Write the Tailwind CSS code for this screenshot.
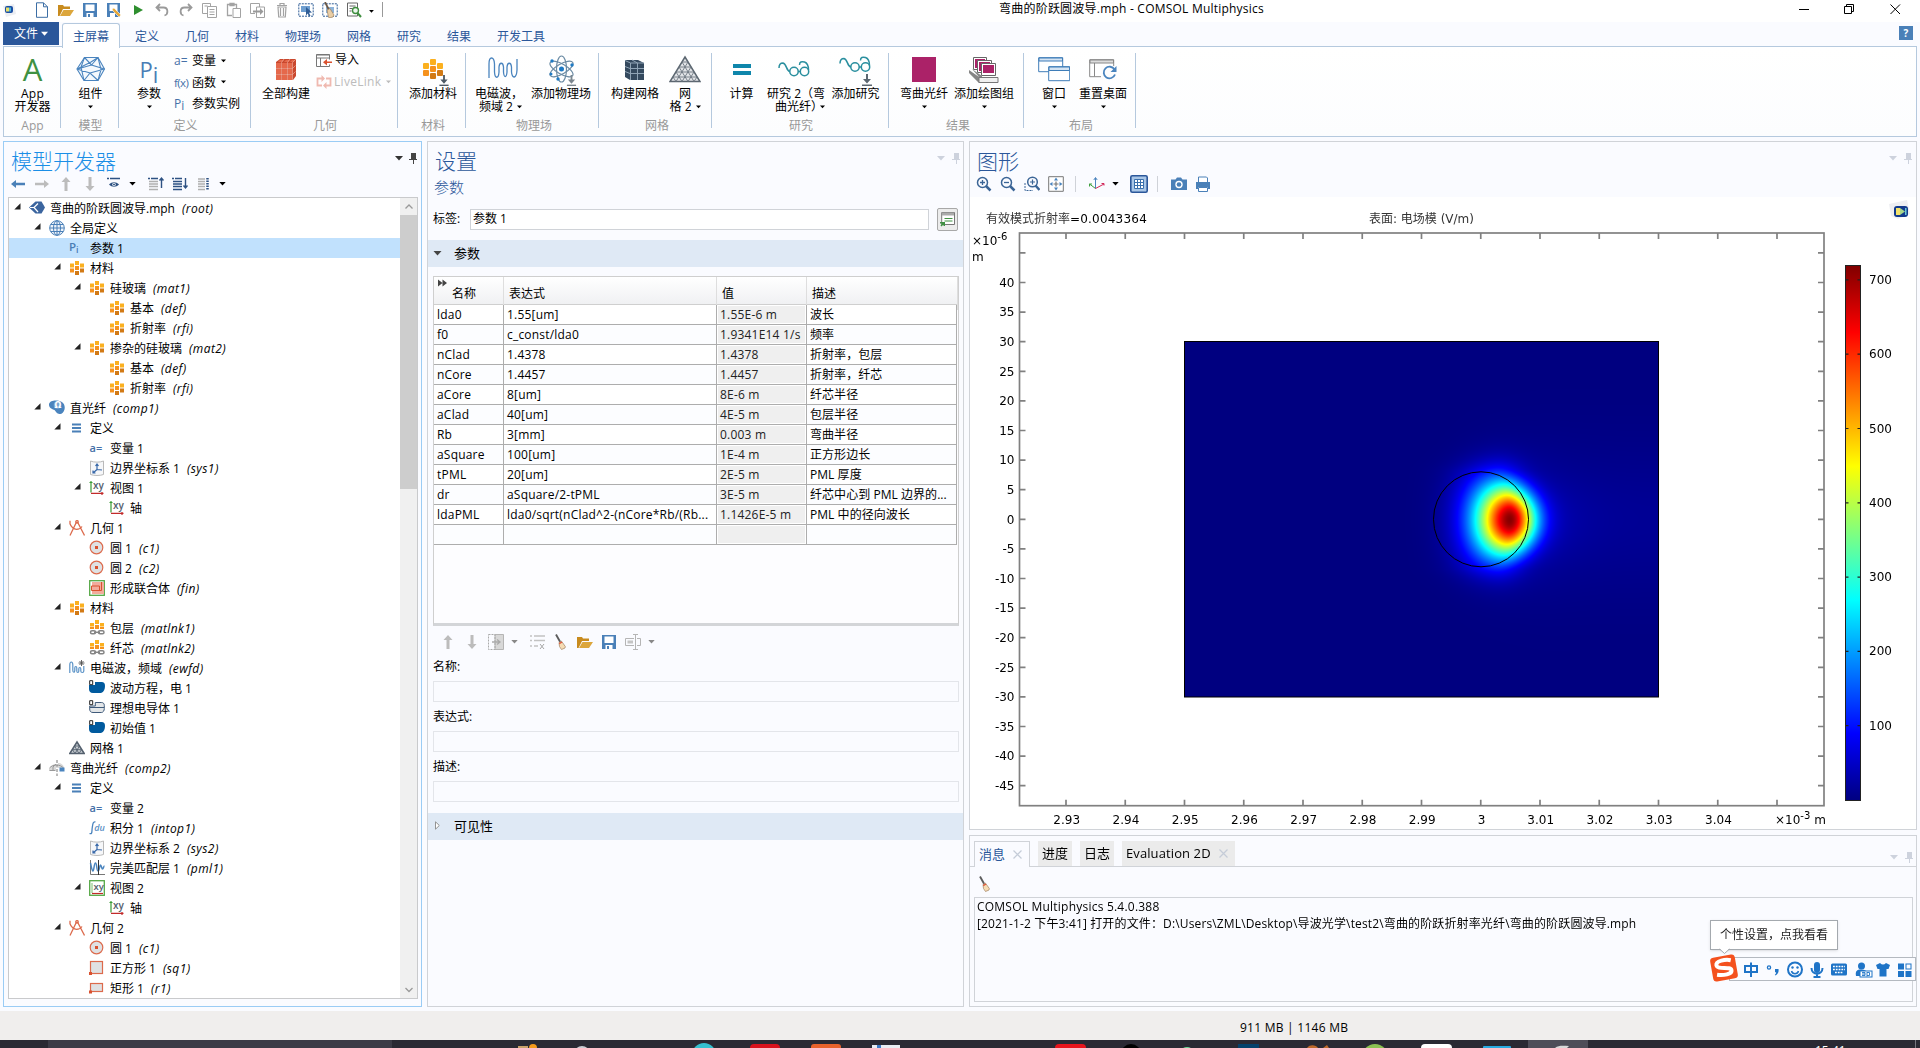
<!DOCTYPE html>
<html lang="zh-CN">
<head>
<meta charset="utf-8">
<title>弯曲的阶跃圆波导.mph - COMSOL Multiphysics</title>
<script src="https://cdn.jsdelivr.net/npm/@tailwindcss/browser@4"></script>
</head>
<body class="w-[1920px] h-[1048px] overflow-hidden bg-[#fafbff] text-black text-[12px] leading-[14px] font-['Open_Sans','Noto_Sans_CJK_SC',sans-serif]">

<svg class="hidden">
  <symbol id="caret" viewBox="0 0 8 5"><path d="M0 0h8L4 4.5z" fill="currentColor"/></symbol>
  <symbol id="pin" viewBox="0 0 8 11"><path d="M2 0h5v6h1v1H5v4H4V7H0V6h2z" fill="currentColor"/></symbol>
  <symbol id="broom" viewBox="0 0 16 16"><path d="M3 .5l4.500 8" stroke="#5c5c5c" stroke-width="1.800"/><path d="M6 8.500l2.500-1.300 3.800 5.300-.3 1.500-3.500 1.500-2-3z" fill="#f6dcb4" stroke="#a98d6d" stroke-width=".8"/><path d="M6 9l2.700-1.600.7 1L6.500 10.300z" fill="#e0533a"/></symbol>
  <symbol id="folder" viewBox="0 0 16 16"><path d="M0 3h5l1 1.500h6V7H5L1.500 14H0z" fill="#c88b1e"/><path d="M5.500 8H16l-4 6H2z" fill="#dca63c"/></symbol>
  <symbol id="save" viewBox="0 0 16 16"><path d="M1 1h14v14H1z" fill="#4a80b8"/><path d="M3.500 2.500h9V9h-9zM4.500 11h7v4h-7z" fill="#fff"/><path d="M6 12h2v3H6z" fill="#4a80b8"/></symbol>
  <symbol id="up" viewBox="0 0 16 16"><path d="M8 1l4.500 5H9.500v9h-3V6H3.500z" fill="#bcbcbc"/></symbol>
  <symbol id="down" viewBox="0 0 16 16"><path d="M8 15l4.500-5H9.500V1h-3v9H3.500z" fill="#bcbcbc"/></symbol>
  <symbol id="dl" viewBox="0 0 10 12"><path d="M4 0h2v5h3L5 9.500 1 5h3z" fill="currentColor"/><path d="M0 10.500h10V12H0z" fill="currentColor"/></symbol>

  <symbol id="root" viewBox="0 0 16 16"><path d="M0 7.500L6.500 1.500h6l3.500 6-3.500 6h-6z" fill="#3b659f"/><path d="M5 7.500L9 3.500M5 7.500l4 4.500M1 7.500h4" stroke="#fff" stroke-width="1.200" fill="none"/></symbol>
  <symbol id="globe" viewBox="0 0 16 16"><g fill="none" stroke="#4a80b8"><circle cx="8" cy="8" r="7.300" fill="#eef3fa"/><ellipse cx="8" cy="8" rx="3.500" ry="7.300"/><path d="M8 .7v14.600M.7 8h14.600M2 4.500h12M2 11.500h12"/></g></symbol>
  <symbol id="pi" viewBox="0 0 16 16"><text x="0" y="10.500" font-size="11.500" font-weight="600" font-family="Open Sans" fill="#4a7db5">P</text><text x="7" y="13" font-size="9" font-weight="600" font-family="Open Sans" fill="#4a7db5">i</text></symbol>
  <symbol id="mat" viewBox="0 0 16 16"><path d="M1 3.500h4v4H1zM6 1h4v4H6zM11 3.500h4v4h-4z" fill="#fbb01f"/><path d="M6 6h4v4H6zM1 8.500h4v4H1z" fill="#f5921e"/><path d="M11 8.500h4v4h-4zM6 11h4v4H6z" fill="#d27a16"/></symbol>
  <symbol id="matlnk" viewBox="0 0 16 16"><path d="M1 3h4v3.500H1zM6 0h4v4H6zM11 3h4v3.500h-4z" fill="#fbb01f"/><path d="M6 5h4v4H6zM1 7h4v2H1zM11 7h4v2h-4z" fill="#f5921e"/><g fill="none" stroke="#858585" stroke-width="1.500"><rect x="1.500" y="10.800" width="5" height="3" rx="1.500"/><rect x="9.500" y="10.800" width="5.500" height="3" rx="1.500"/><path d="M5 12.300h6"/></g></symbol>
  <symbol id="comp1" viewBox="0 0 16 16"><path d="M0 4C1-.5 9 0 12 1.500c4 2 4 6 3.500 8-.7 3-3 5-5 4.500-3-.5-3.500-2.500-5-4C3.500 9.500-.5 8 0 4z" fill="#4a84be"/><circle cx="8.500" cy="5" r="3.800" fill="#79a5d2"/><text x="5.400" y="8" font-size="8" font-weight="700" font-family="DejaVu Sans" fill="#fff">Ω</text></symbol>
  <symbol id="comp2" viewBox="0 0 16 16"><path d="M0 9c1-3 4-5 7-5v6L0 10.500zM9 3c3 0 6 2 6 5H9z" fill="#d9d9d9"/><path d="M.5 8C4 4 11 4 14.500 8M4 11V7l3-3M.5 10.500h6" stroke="#999" fill="none"/><path d="M10.500 7.500h5v4h-5z" fill="#4a84be"/><path d="M8 0v16" stroke="#777" stroke-dasharray="3 1.500"/></symbol>
  <symbol id="def" viewBox="0 0 16 16"><path d="M3 3.500h9v2H3zM3 7h9v2H3zM3 10.500h9v2H3z" fill="#4a80b8"/></symbol>
  <symbol id="var" viewBox="0 0 16 16"><text x=".5" y="11.500" font-size="11" font-weight="600" font-family="Open Sans" fill="#4671a8">a=</text></symbol>
  <symbol id="intg" viewBox="0 0 16 16"><path d="M.5 13.500c3 1 2.200-2 2.700-5.500S4 1 6.500 2" stroke="#4a84be" stroke-width="1.300" fill="none"/><text x="5.200" y="11" font-size="9" font-style="italic" font-weight="600" font-family="Open Sans" fill="#5a8fc4">du</text></symbol>
  <symbol id="sys" viewBox="0 0 16 16"><path d="M1.500 1v13.500c3 1.300 10 1.300 13 0V1c-3 1.500-10 1.500-13 0z" fill="#f6f7f9" stroke="#b9b9b9"/><path d="M8 10V5M8 9.500l5 .5M8 9.500L4 13M6.500 6L8 4l1.500 2M4 10.500V13h2.500" stroke="#3667a8" stroke-width="1.200" fill="none"/></symbol>
  <symbol id="xy" viewBox="0 0 16 16"><path d="M2 1v11.500" stroke="#3a9a35" stroke-width="1.200"/><path d="M2 13.300h12.500M13 12v3" stroke="#c22a2a" stroke-width="1.200"/><path d="M.5 2.500h3" stroke="#3a9a35"/><text x="4" y="9" font-size="10" font-weight="600" font-family="Open Sans" fill="#54606e">xy</text></symbol>
  <symbol id="xyg" viewBox="0 0 16 16"><rect x=".7" y=".7" width="14.600" height="14.600" fill="#fff" stroke="#55a845" stroke-width="1.300"/><path d="M3 3v10" stroke="#7bbf70"/><path d="M3 13.500h11" stroke="#c22a2a" stroke-width="1.200"/><text x="4.500" y="9.500" font-size="9.500" font-weight="600" font-family="Open Sans" fill="#54606e">xy</text></symbol>
  <symbol id="geom" viewBox="0 0 16 16"><g fill="none" stroke="#dc6a4c" stroke-width="1.300"><path d="M8.500 2L15.500 15.500M7.500 2L1 15.500M1 .8v3c1 3 4 5.500 6.500 5.500S12 8 13 6.500"/><circle cx="8" cy="1.800" r="1.200"/></g></symbol>
  <symbol id="circ" viewBox="0 0 16 16"><circle cx="7.500" cy="7.500" r="6.300" fill="#dfe1e3" stroke="#dc6a4c" stroke-width="1.200"/><path d="M6 6h3v3H6z" fill="#d9512f"/></symbol>
  <symbol id="fin" viewBox="0 0 16 16"><rect x=".7" y=".7" width="14.600" height="14.600" fill="#fff" stroke="#55a845" stroke-width="1.300"/><path d="M3 2h12v12H3z" fill="#f3ab9c"/><path d="M2.500 6h8v4.500h-8zM5 10.500h7.500V2" fill="none" stroke="#d9512f"/></symbol>
  <symbol id="sq" viewBox="0 0 16 16"><rect x="1.500" y="1.500" width="12" height="12" fill="#dfe1e3" stroke="#dc6a4c" stroke-width="1.200"/><path d="M0 12h3v3H0z" fill="#d9512f"/></symbol>
  <symbol id="rect" viewBox="0 0 16 16"><rect x="1.500" y="3.500" width="12" height="8" fill="#dfe1e3" stroke="#dc6a4c" stroke-width="1.200"/><path d="M0 10.500h3v3H0z" fill="#d9512f"/></symbol>
  <symbol id="wave" viewBox="0 0 16 16"><path d="M.8 13V5c0-4 3-4 3 0v5c0 3 2 3 2 0V8c0-2 2-2 2 0v3c0 2 2 2 2 0V9c0-2 2-2 2 0v2c0 2 3 2 3 0V6" fill="none" stroke="#5b93c7" stroke-width="1.200"/><path d="M12.500 0v6M9.500 3h6M10.500 1l4 4M14.500 1l-4 4" stroke="#555" stroke-width=".9"/></symbol>
  <symbol id="dom" viewBox="0 0 16 16"><path d="M0 5h6V2h6c3 0 4 1 4 4s-1 6-4 7H4c-3 0-4-2-4-4z" fill="#005a9e"/><path d="M.7.700h3v4h-3z" fill="#fff" stroke="#222"/></symbol>
  <symbol id="pec" viewBox="0 0 16 16"><path d="M.7 6h5.600V2.500h6c2 0 3 1 3 3v3c0 2-1 4-3 4H4c-2.500 0-3.300-1.500-3.300-3.500zM1 7.500h14" fill="#e3e6e8" stroke="#3f5a7a"/><path d="M.7.700h3v4h-3z" fill="#fff" stroke="#222"/></symbol>
  <symbol id="mesh" viewBox="0 0 16 16"><path d="M8 2L15.200 13.500H.8z" fill="#c9ced3" stroke="#54606e" stroke-width="1.500"/><path d="M5.500 6h5M3.500 9.700h9M5.500 6l4.500 7.500M10.500 6L6 13.500M3.500 9.700L6 13.500M12.500 9.700L10 13.500" stroke="#54606e" stroke-width=".9" fill="none"/></symbol>
  <symbol id="pml" viewBox="0 0 16 16"><path d="M1.500 0v14.500H16" stroke="#777" fill="none"/><path d="M1.500 3c1 5 1.500 8 2.500 8s1-8 2.500-8 1 8 2.500 8 1.500-6 2.500-6 1 4 2 4 1-3 2-3" stroke="#4a84be" stroke-width="1.500" fill="none"/><path d="M9.500 0v15" stroke="#333"/></symbol>
</svg>

<div class="flex flex-col w-full h-full">

<!-- title bar -->
<header class="flex items-center h-[22px] bg-white shrink-0">
  <div class="flex items-center w-[360px] h-[20px] mt-[-2px] shrink-0 [&>svg]:shrink-0">
    <svg class="w-[14px] h-[14px] ml-[2px]" viewBox="0 0 14 14"><path d="M1 3l11-2 2 10-10 3z" fill="#eceef2"/><rect x="3" y="3" width="8" height="7" rx="2" fill="#1b4fa5"/><rect x="4" y="4.500" width="3" height="4" fill="#e8e06a"/><rect x="7" y="4.500" width="2" height="4" fill="#4fb6d8"/></svg>
    <div class="w-px h-[15px] bg-[#999] ml-[10px] mr-[8px] mt-[2px]"></div>
    <svg class="w-4 h-4" viewBox="0 0 16 16"><path d="M2.500 .8h7l4 4v10.500h-11zM9.500 .8v4h4" fill="#fff" stroke="#3c6ea5"/></svg>
    <svg class="w-4 h-4 ml-2"><use href="#folder"/></svg>
    <svg class="w-4 h-4 ml-2"><use href="#save"/></svg>
    <svg class="w-4 h-4 ml-2" viewBox="0 0 16 16"><path d="M1 1h13v14H1z" fill="#4a80b8"/><path d="M3.500 2.500h8V9h-8zM4 11h5v4H4z" fill="#fff"/><path d="M6 7l2-1 7 7-2 2-6-6z" fill="#e8a838" stroke="#fff" stroke-width=".6"/></svg>
    <svg class="w-4 h-4 ml-2" viewBox="0 0 16 16"><path d="M4 3l9 5-9 5z" fill="#2f8f2f"/></svg>
    <svg class="w-4 h-4 ml-2" viewBox="0 0 16 16"><path d="M6 2L2.500 5.500 6 9M3 5.500h6.500c5 0 5 7 1 8" fill="none" stroke="#9a9a9a" stroke-width="1.800"/></svg>
    <svg class="w-4 h-4 ml-2" viewBox="0 0 16 16"><path d="M10 2l3.500 3.500L10 9M13 5.500H6.500c-5 0-5 7-1 8" fill="none" stroke="#9a9a9a" stroke-width="1.800"/></svg>
    <svg class="w-4 h-4 ml-2" viewBox="0 0 16 16"><path d="M5.500 11.500h-5v-10h8v3M5.500 4.500h9v11h-9zM7.500 7.500h5M7.500 10h5M7.500 12.500h5M2.500 4h3" fill="none" stroke="#a3a3a3"/></svg>
    <svg class="w-4 h-4 ml-2" viewBox="0 0 16 16"><path d="M6 13.500H1.500v-11h9V6M4 1.500h4v2H4z" fill="none" stroke="#a3a3a3" stroke-width="1.300"/><path d="M7 6.500h7.500v9H7z" fill="#fff" stroke="#a3a3a3"/></svg>
    <svg class="w-4 h-4 ml-2" viewBox="0 0 16 16"><path d="M5 11.500H.5v-10h9V5M6.500 5h8v10.500h-8z" fill="none" stroke="#a3a3a3"/><path d="M3 8.500h7V6l3.500 3.500L10 13v-2.500H3z" fill="#9a9a9a"/></svg>
    <svg class="w-4 h-4 ml-2" viewBox="0 0 16 16"><path d="M3 3.500h10M6 3V1.500h4V3M4 5l.7 10h6.600L12 5zM6.500 6v8M9.500 6v8" fill="none" stroke="#a3a3a3" stroke-width="1.200"/></svg>
    <svg class="w-4 h-4 ml-2" viewBox="0 0 16 16"><path d="M.8 1.800h14.400v12.400H.8z" fill="none" stroke="#2f5d96" stroke-dasharray="2 1"/><path d="M3 4h9v6H3z" fill="#6f9fd0"/><path d="M8 5l6 5.500-3 .3 1.500 3-1.500.7-1.300-3L8 13.500z" fill="#2f5d96"/></svg>
    <svg class="w-4 h-4 ml-2" viewBox="0 0 16 16"><path d="M.8 1.800h14.400v12.400H.8z" fill="none" stroke="#2f5d96" stroke-dasharray="2 1"/><path d="M4 5h8v6H4z" fill="#8db3da"/><path d="M3 0l4 8" stroke="#6b5847" stroke-width="1.800"/><path d="M5 8l3-1.500 4 6.500-1 2-4 1-1-3z" fill="#e9cda4" stroke="#9c7f60" stroke-width=".7"/></svg>
    <svg class="w-4 h-4 ml-2" viewBox="0 0 16 16"><path d="M1.500 1h10v13h-10zM3.500 4h6M3.500 6.500h3M3.500 9h2" fill="none" stroke="#666"/><circle cx="9.500" cy="8.500" r="3" fill="#eef7ee" stroke="#3f8f3f" stroke-width="1.400"/><path d="M11.500 11l3.500 4" stroke="#3f8f3f" stroke-width="2"/></svg>
  </div>
  <svg class="w-[5px] h-[3px] ml-[9px]"><use href="#caret"/></svg>
  <div class="w-px h-[15px] bg-[#999] ml-[8px] mt-[-3px]"></div>
  <div class="ml-[616px] -mt-[4px] whitespace-nowrap w-[270px] tracking-[0.22px]">弯曲的阶跃圆波导.mph - COMSOL Multiphysics</div>
  <svg class="ml-[530px] w-[106px] h-[16px] mt-[-5px]" viewBox="0 0 106 16"><g fill="none" stroke="#000"><path d="M0 8.500h10"/><path d="M45.500 5.500h7v7h-7zM47.500 5.500v-2h7v7h-2"/><path d="M91.500 3.500l9.500 9.500M101 3.500L91.500 13"/></g></svg>
</header>

<!-- ribbon tabs -->
<nav class="flex h-[24px] pl-[3px] shrink-0 text-[#2b579a] leading-[23px] relative">
  <div class="flex items-center justify-center w-[56px] h-[23px] bg-[#2b579a] text-white">文件<svg class="w-[7px] h-[6px] ml-[3px]"><use href="#caret"/></svg></div>
  <div class="w-[58px] ml-[3px] h-[25px] mt-px pt-px text-center bg-white border border-b-0 border-[#b5c9de] rounded-t-[3px] z-10 leading-[23px]">主屏幕</div>
  <div class="flex text-center pt-[3px]">
    <span class="w-[50px] ml-[2px]">定义</span><span class="w-[50px]">几何</span><span class="w-[50px]">材料</span><span class="w-[62px]">物理场</span><span class="w-[50px]">网格</span><span class="w-[50px]">研究</span><span class="w-[50px]">结果</span><span class="w-[74px]">开发工具</span>
  </div>
  <div class="ml-auto mr-[7px] mt-[4px] w-[14px] h-[14px] bg-[#4a80b8] text-white font-bold text-[10px] leading-[14px] text-center">?</div>
</nav>

<!-- ribbon -->
<section id="ribbon" class="flex h-[91px] ml-[3px] mr-[3px] shrink-0 border border-[#b5c9de] bg-linear-to-b from-white to-[#fcfdfe] whitespace-nowrap leading-[13px]">
  <div class="w-[56px] pl-px pt-[6px] flex flex-col">
    <div class="flex h-[66px] justify-center">
      <div class="flex flex-col items-center w-[56px] pt-px"><div class="h-[33px] pt-[2px] text-[31px] leading-[27px] text-[#3f9142]">A</div><div class="tracking-[0.3px]">App</div><div>开发器</div></div>
    </div>
    <div class="text-center text-[#999] leading-[13px]">App</div>
  </div>
  <div class="w-px h-[75px] mt-[6px] bg-[#b5c9de]"></div>

  <div class="w-[57px] pl-[2px] pt-[6px] flex flex-col">
    <div class="flex h-[66px] justify-center">
      <div class="flex flex-col items-center w-[56px] pt-px"><svg class="w-[30px] h-[33px]" viewBox="0 0 30 33"><g fill="none" stroke="#4a84be" stroke-width="1.100"><path d="M8.500 3.500L22 3.500 28.500 15 22 26.500H8L1 15z" fill="#f5f9fd"/><path d="M8.500 3.500L15.500 11 28.500 15M15.500 11L1.500 15M22 3.500L15 8M15 8L1 15M8 26.500L14 19 22 26.500M14 19L28.500 15M14 19L1 15M15.500 11L22 3.500M8.500 3.500L5 13l3 13.500M22 3.500l3 12-3 11"/></g></svg><div>组件</div><svg class="w-[5px] h-[4px] mt-[5px]"><use href="#caret"/></svg></div>
    </div>
    <div class="text-center text-[#999]">模型</div>
  </div>
  <div class="w-px h-[75px] mt-[6px] bg-[#b5c9de]"></div>

  <div class="w-[131px] pt-[6px] flex flex-col">
    <div class="flex h-[66px]">
      <div class="flex flex-col items-center w-[52px] ml-[4px] pt-px"><div class="h-[33px] pt-[2px] leading-[27px] text-[22px] text-[#4a7db5]">P<span class="relative top-[5px]">i</span></div><div>参数</div><svg class="w-[5px] h-[4px] mt-[5px]"><use href="#caret"/></svg></div>
      <div class="flex flex-col gap-[8.500px] ml-[-1px] pt-px [&>div]:flex [&>div]:items-center">
        <div><span class="w-[18px] text-[#4671a8]">a=</span>变量<svg class="w-[5px] h-[4px] ml-[5px]"><use href="#caret"/></svg></div>
        <div><span class="w-[18px] text-[#4671a8] tracking-[-0.6px] text-[11.500px]">f(x)</span>函数<svg class="w-[5px] h-[4px] ml-[5px]"><use href="#caret"/></svg></div>
        <div><span class="w-[18px] text-[#4671a8]">P<span class="relative top-[2px]">i</span></span>参数实例</div>
      </div>
    </div>
    <div class="text-center text-[#999] pl-[2px]">定义</div>
  </div>
  <div class="w-px h-[75px] mt-[6px] bg-[#b5c9de]"></div>

  <div class="w-[146px] pt-[6px] flex flex-col">
    <div class="flex h-[66px]">
      <div class="flex flex-col items-center w-[56px] ml-[7px] pt-px"><svg class="w-[20px] h-[33px]" viewBox="0 0 20 33"><path d="M0 8l4-3h16v17l-3 4H0z" fill="#c9482e"/><path d="M0 9h5v5H0zM6 9h5v5H6zM12 9h4v5h-4zM0 15h5v5H0zM6 15h5v5H6zM12 15h4v5h-4zM0 21h5v5H0zM6 21h5v5H6zM12 21h4v5h-4zM2 8l2-2h4L6 8zM8 8l2-2h4l-2 2zM14 8l2-2h3l-2 2z" fill="#e5684b"/><path d="M0 14.500h16.500l3-3M0 20.500h16.500l3-3M5.500 26V8.500L8 5M11.500 26V8.500L14 5M16.500 26V8.500L20 5" stroke="#f6b9a9" stroke-width=".6" fill="none"/></svg><div>全部构建</div></div>
      <div class="flex flex-col ml-[2px] gap-[9px]">
        <div class="flex items-center h-[13px]"><svg class="w-[15px] h-[13px] mr-[4px] mt-[2px] overflow-visible" viewBox="0 0 15 13"><path d="M.5 1h13M.5 4h13M.5 12.500V.5h13v5M.5 12.500h13v-2M4.500 4v8" fill="none" stroke="#777"/><path d="M16 7.500h-5V5L7 8.200l4 3.200V9h5z" fill="#d9512f"/></svg>导入</div>
        <div class="flex items-center h-[13px] text-[#bcbcbc] tracking-[0.3px]"><svg class="w-[16px] h-[14px] mr-[2px]" viewBox="0 0 16 14"><g fill="none" stroke="#efb9b0" stroke-width="1.800"><path d="M6 10.500H1.500v-7h6M10 3.500h4.500v7h-6"/></g><path d="M5.500 0v7L9 3.500zM10.500 7v7L7 10.500z" fill="#efb9b0"/></svg>LiveLink<svg class="w-[5px] h-[4px] ml-[5px]"><use href="#caret"/></svg></div>
      </div>
    </div>
    <div class="text-center text-[#999] pl-[2px]">几何</div>
  </div>
  <div class="w-px h-[75px] mt-[6px] bg-[#b5c9de]"></div>

  <div class="w-[67px] pl-[3px] pt-[6px] flex flex-col">
    <div class="flex h-[66px] justify-center">
      <div class="flex flex-col items-center w-[60px] pt-px"><svg class="w-[26px] h-[33px] ml-[6px]" viewBox="0 0 26 33"><g fill="#fbb01f"><rect y="9" width="6" height="6" rx="1"/><rect x="7" y="5" width="6" height="6" rx="1"/><rect x="14" y="9" width="6" height="6" rx="1"/></g><g fill="#f5921e"><rect x="7" y="12" width="6" height="6" rx="1"/><rect y="16" width="6" height="6" rx="1"/></g><g fill="#d27a16"><rect x="14" y="16" width="6" height="6" rx="1"/><rect x="7" y="19" width="6" height="6" rx="1"/></g><svg x="16" y="21" width="10" height="11" color="#4d5a66"><use href="#dl"/></svg></svg><div>添加材料</div></div>
    </div>
    <div class="text-center text-[#999]">材料</div>
  </div>
  <div class="w-px h-[75px] mt-[6px] bg-[#b5c9de]"></div>

  <div class="w-[132px] pt-[6px] flex flex-col">
    <div class="flex h-[66px]">
      <div class="flex flex-col items-center w-[66px] pt-px"><svg class="w-[30px] h-[33px] ml-[7px]" viewBox="0 0 30 33"><path d="M1 24V10c0-8 5-8 5.500 0v8c.5 7 4 7 4.500 0v-5c.5-5 4-5 4.500 0v5c.5 6 3 6 3.500 0v-5c.5-5 4-5 4.500 0v5c.5 7 5 7 5.500-2V5" fill="none" stroke="#4a84be" stroke-width="1.300"/></svg><div>电磁波，</div><div class="flex items-center pl-[3px]">频域 2<svg class="w-[5px] h-[4px] ml-[4px]"><use href="#caret"/></svg></div></div>
      <div class="flex flex-col items-center w-[58px] pt-px"><svg class="w-[30px] h-[33px] ml-[4px]" viewBox="0 0 30 33"><g fill="none" stroke="#6b8ba4" stroke-width="1.200"><ellipse cx="13.500" cy="15" rx="5" ry="13"/><ellipse cx="13.500" cy="15" rx="5" ry="13" transform="rotate(60 13.500 15)"/><ellipse cx="13.500" cy="15" rx="5" ry="13" transform="rotate(120 13.500 15)"/></g><g fill="#1f7ac4"><circle cx="13.500" cy="15" r="2.500"/><circle cx="4" cy="7" r="1.700"/><circle cx="24" cy="11" r="1.700"/><circle cx="10" cy="25" r="1.700"/><circle cx="3" cy="20" r="1.500"/></g><svg x="18" y="21" width="11" height="11" color="#7b868f"><use href="#dl"/></svg></svg><div>添加物理场</div></div>
    </div>
    <div class="text-center text-[#999] pl-[4px]">物理场</div>
  </div>
  <div class="w-px h-[75px] mt-[6px] bg-[#b5c9de]"></div>

  <div class="w-[112px] pt-[6px] flex flex-col">
    <div class="flex h-[66px]">
      <div class="flex flex-col items-center w-[72px] pt-px"><svg class="w-[20px] h-[33px]" viewBox="0 0 20 33"><path d="M0 6h13l6 3v17H5l-5-3z" fill="#34495e"/><path d="M0 12.500l5 2h14M0 17.500l5 2h14M5.500 26V9L0 6.500M5.500 9H19M12.500 26V9L7 6" stroke="#8fa3b5" stroke-width="1" fill="none"/></svg><div>构建网格</div></div>
      <div class="flex flex-col items-center w-[28px] pt-px"><svg class="w-[32px] h-[33px]" viewBox="0 0 32 33"><path d="M16 3L31 27.500H1z" fill="#e3e5e8" stroke="#5b6670" stroke-width="1.500"/><path d="M13 8h6M10 13h12M7 18h18M4 23h24M13 8l12 19.500M10 13l9 14.500M7 18l6 9.500M4 23l3 4.500M19 8L7 27.500M22 13l-9 14.500M25 18l-6 9.500M28 23l-3 4.500" stroke="#6b757f" stroke-width=".9" fill="none"/></svg><div>网</div><div class="flex items-center">格 2<svg class="w-[5px] h-[4px] ml-[4px]"><use href="#caret"/></svg></div></div>
    </div>
    <div class="text-center text-[#999] pl-[4px]">网格</div>
  </div>
  <div class="w-px h-[75px] mt-[6px] bg-[#b5c9de]"></div>

  <div class="w-[176px] pt-[6px] flex flex-col">
    <div class="flex h-[66px]">
      <div class="flex flex-col items-center w-[60px] pt-px"><svg class="w-[18px] h-[33px]" viewBox="0 0 18 33"><path d="M0 10h18v4H0zM0 17h18v4H0z" fill="#0e86ab"/></svg><div>计算</div></div>
      <div class="flex flex-col items-center w-[50px] pt-px"><svg class="w-[32px] h-[33px] -ml-[4px]" viewBox="0 0 32 33"><g fill="none" stroke="#2a8f9f" stroke-width="1.500"><circle cx="16" cy="17.500" r="4.200"/><circle cx="26.500" cy="17.500" r="4.200"/><path d="M20 17.500h2.500M12 17.500C8 17 9 10 5 9c-3 0-4 2-4 5M30.500 16c0-4-1-7-4-8-3-.5-5-.5-5 3"/></g></svg><div>研究 2（弯</div><div class="flex items-center pl-[8px]">曲光纤）<svg class="w-[5px] h-[4px] -ml-[3px]"><use href="#caret"/></svg></div></div>
      <div class="flex flex-col items-center w-[66px] ml-[2px] pt-px"><svg class="w-[34px] h-[33px]" viewBox="0 0 34 33"><g fill="none" stroke="#2a8f9f" stroke-width="1.500"><circle cx="16" cy="13" r="4.200"/><circle cx="26.500" cy="13" r="4.200"/><path d="M20 13h2.500M12 13C8 12.500 9 5.500 5 4.500 2 4.500 1 6.500 1 9.500M30.500 11.500c0-4-1-7-4-8-3-.5-5-.5-5 3"/></g><svg x="22" y="20" width="12" height="12" color="#5b6670"><use href="#dl"/></svg></svg><div>添加研究</div></div>
    </div>
    <div class="text-center text-[#999] pl-[2px]">研究</div>
  </div>
  <div class="w-px h-[75px] mt-[6px] bg-[#b5c9de]"></div>

  <div class="w-[134px] pt-[6px] flex flex-col">
    <div class="flex h-[66px]">
      <div class="flex flex-col items-center w-[70px] pt-px"><div class="h-[33px] pt-[3px]"><div class="w-[24px] h-[25px] bg-[#ab2268]"></div></div><div>弯曲光纤</div><svg class="w-[5px] h-[4px] mt-[5px]"><use href="#caret"/></svg></div>
      <div class="flex flex-col items-center w-[50px] pt-px"><svg class="w-[30px] h-[33px]" viewBox="0 0 30 33"><g fill="#ab2268" stroke="#666"><path d="M4.500 3.500h13v12h-13z" fill="#fff"/><path d="M6 5h10v9H6z" stroke="none"/><path d="M8.500 6.500h14v12h-14z" fill="#fff"/><path d="M10 8h11v9H10z" stroke="none"/><path d="M12.500 9.500h14v12h-14z" fill="#fff"/><path d="M14 11h11v8H14z" stroke="none"/></g><path d="M0 16l10 7v6L0 19zM3 15l10 7v1h-3z" fill="#858585"/><path d="M10 23.500h19v5H10z" fill="#f0f0f0" stroke="#777"/></svg><div>添加绘图组</div><svg class="w-[5px] h-[4px] mt-[5px]"><use href="#caret"/></svg></div>
    </div>
    <div class="text-center text-[#999] pl-[4px]">结果</div>
  </div>
  <div class="w-px h-[75px] mt-[6px] bg-[#b5c9de]"></div>

  <div class="w-[111px] pt-[6px] flex flex-col">
    <div class="flex h-[66px]">
      <div class="flex flex-col items-center w-[60px] pt-px"><svg class="w-[32px] h-[33px]" viewBox="0 0 32 33"><g stroke="#3f7db8" fill="#fff"><path d="M.7 3.700h24v14h-24z"/><path d="M1 4h23.500v3H1z" fill="#d5e4f3"/><path d="M10.700 12.700h21v14h-21z"/><path d="M11 13h20.500v3.500H11z" fill="#d5e4f3"/></g></svg><div>窗口</div><svg class="w-[5px] h-[4px] mt-[5px]"><use href="#caret"/></svg></div>
      <div class="flex flex-col items-center w-[38px] pt-px"><svg class="w-[28px] h-[33px]" viewBox="0 0 28 33"><path d="M.7 5.700h24v17h-24zM5.500 9v13.500" fill="#fff" stroke="#888"/><path d="M1 6h23.500v3H1z" fill="#ddd" stroke="#888"/><path d="M12 12h16v14H12z" fill="#fdfdfe"/><path d="M25.500 15.500a5.800 5.800 0 1 0 .5 5" fill="none" stroke="#4a84be" stroke-width="1.800"/><path d="M27.500 12v6h-6z" fill="#4a84be"/></svg><div>重置桌面</div><svg class="w-[5px] h-[4px] mt-[5px]"><use href="#caret"/></svg></div>
    </div>
    <div class="text-center text-[#999] pl-[3px]">布局</div>
  </div>
  <div class="w-px h-[75px] mt-[6px] bg-[#b5c9de]"></div>
</section>

<!-- workspace -->
<main class="flex h-[870px] pt-[4px] pl-[3px] shrink-0">

  <!-- model builder -->
  <section class="w-[419px] h-[866px] border border-[#9accf5] pl-[4px] pr-[3px]">
    <div class="flex h-[31px] items-center pl-[3px] pt-[6px] text-[21px] leading-[26px] text-[#1a8ee6] font-light">模型开发器
      <svg class="w-[8px] h-[5px] text-[#333] ml-auto -mt-[4px]"><use href="#caret"/></svg><svg class="w-[8px] h-[11px] text-[#444] ml-[6px] mr-[1px] -mt-[4px]"><use href="#pin"/></svg>
    </div>
    <div class="flex items-center h-[22px] mb-[2px] pl-[2px]">
      <svg class="w-4 h-4" viewBox="0 0 16 16"><path d="M1 8l5-4v2.800h9v2.400H6V12z" fill="#4a80b8"/></svg>
      <svg class="w-4 h-4 ml-2" viewBox="0 0 16 16"><path d="M15 8l-5-4v2.800H1v2.400h9V12z" fill="#bcbcbc"/></svg>
      <svg class="w-4 h-4 ml-2"><use href="#up"/></svg>
      <svg class="w-4 h-4 ml-2"><use href="#down"/></svg>
      <svg class="w-4 h-4 ml-2" viewBox="0 0 16 16"><path d="M1 2.500h2M4 2.500h10" stroke="#2e5283" stroke-width="1.500"/><path d="M3 8.500c3-3 7-3 10 0-3 3-7 3-10 0z" fill="#2e5283"/><circle cx="8" cy="8.500" r="1.700" fill="#fff"/><circle cx="8" cy="8.500" r="1" fill="#2e5283"/></svg>
      <svg class="w-[7px] h-[4px] ml-[7px]"><use href="#caret"/></svg>
      <svg class="w-4 h-4 ml-[12px]" viewBox="0 0 16 16"><path d="M0 2.500h2M3 2.500h7" stroke="#2e5283" stroke-width="1.500"/><path d="M1 5.500h9M1 8h9M1 10.500h9M1 13.500h9" stroke="#b0b0b0" stroke-width="1.500"/><path d="M13.500 12V2M11.500 4.500l2-2.500 2 2.500" stroke="#2e5283" stroke-width="1.400" fill="none"/></svg>
      <svg class="w-4 h-4 ml-2" viewBox="0 0 16 16"><path d="M0 2.500h2M3 2.500h7M1 5.500h9M1 8h9M1 10.500h9M1 13.500h9" stroke="#2e5283" stroke-width="1.500"/><path d="M13.500 2v10M11.500 9.500l2 2.500 2-2.500" stroke="#2e5283" stroke-width="1.400" fill="none"/></svg>
      <svg class="w-4 h-4 ml-2" viewBox="0 0 16 16"><path d="M2 3h7M2 5.500h7M2 8h7M2 10.500h7M2 13.500h7" stroke="#b0b0b0" stroke-width="1.500"/><path d="M11.500 2v12" stroke="#2e5283" stroke-width="2.500" stroke-dasharray="1.500 1"/></svg>
      <svg class="w-[7px] h-[4px] ml-[7px]"><use href="#caret"/></svg>
    </div>
    <div class="flex h-[802px] border border-[#c9cacc] bg-white">
      <div id="tree" class="flex-1 overflow-hidden"></div>
      <div class="w-[17px] bg-[#f0f0f0] flex flex-col items-center">
        <svg class="w-[8px] h-[17px]" viewBox="0 0 8 17"><path d="M.5 10.500L4 7l3.500 3.500" fill="none" stroke="#9a9a9a" stroke-width="1.300"/></svg>
        <div class="w-full h-[274px] bg-[#cdcdcd]"></div>
        <svg class="w-[8px] h-[17px] mt-auto" viewBox="0 0 8 17"><path d="M.5 7L4 10.500 7.500 7" fill="none" stroke="#9a9a9a" stroke-width="1.300"/></svg>
      </div>
    </div>
  </section>

  <!-- settings -->
  <section class="w-[537px] h-[866px] ml-[5px] border border-[#d0d3d8]">
    <div class="flex h-[32px] items-center pl-[7px] pt-[5px] text-[21px] leading-[26px] text-[#2b579a] font-light">设置
      <svg class="w-[8px] h-[5px] text-[#cdd2dd] ml-auto -mt-[4px]"><use href="#caret"/></svg><svg class="w-[8px] h-[11px] text-[#cdd2dd] ml-[7px] mr-[3px] -mt-[4px]"><use href="#pin"/></svg>
    </div>
    <div class="pl-[6px] text-[15px] leading-[22px] text-[#2b579a] h-[33px] pt-[2px] font-light">参数</div>
    <div class="flex items-center h-[24px] pl-[5px]">
      <div class="w-[37px]">标签:</div>
      <div class="w-[459px] h-[21px] border border-[#d0d3d8] bg-white leading-[18px] pl-[2px]">参数 1</div>
      <div class="ml-[8px] w-[21px] h-[23px] border border-[#a8a8a8] rounded-[2px] bg-[#ececec] flex items-center justify-center"><svg class="w-[16px] h-[16px]" viewBox="0 0 16 16"><path d="M1.700 1.500h12.800v12H1.700z" fill="#fff" stroke="#777"/><path d="M2 1.500h12v3H2z" fill="#aaa"/><path d="M4.500 7.500h8M4.500 10h8" stroke="#3f9142" stroke-width="1.200"/><path d="M0 11h5v4H3.500v-1.500L1.500 15.500.500 14.500 2 12.500H0z" fill="#3f9142"/></svg></div>
    </div>
    <div class="flex items-center h-[27px] mt-[9px] bg-[#dfe9f5] text-[13px] pl-[5px] pb-[2px]"><svg class="w-[9px] h-[5px] mr-[12px] mt-[2px] text-[#444]"><use href="#caret"/></svg>参数</div>

    <div class="ml-[5px] mr-[4px] mt-[9px] h-[350px] border border-[#cfcfcf] border-b-[3px] border-b-[#d3d5d8] bg-[#fdfdff] tracking-[0.2px]">
      <div class="grid grid-cols-[70px_213px_90px_1fr] h-[28px] bg-linear-to-b from-white to-[#f0f1f3] border-b border-[#cfcfcf] leading-[33px] tracking-normal [&>div]:border-r [&>div]:border-[#dedede]">
        <div class="flex"><svg class="w-[9px] h-[8px] ml-[4px] mt-[2px]" viewBox="0 0 9 8"><path d="M0 .5L4.500 4 0 7.500zM4.500 .5L9 4 4.500 7.500z" fill="#444"/></svg><span class="ml-[5px]">名称</span></div>
        <div class="pl-[5px]">表达式</div><div class="pl-[5px]">值</div><div class="pl-[5px] border-r-0">描述</div>
      </div>
      <div id="params"></div>
    </div>

    <div class="flex items-center h-[31px] pl-[12px] text-[#888]">
      <svg class="w-4 h-4"><use href="#up"/></svg>
      <svg class="w-4 h-4 ml-2"><use href="#down"/></svg>
      <svg class="w-4 h-4 ml-2" viewBox="0 0 16 16"><path d="M7 .5h8.500v15H7z" fill="#d8d8d8" stroke="#b5b5b5"/><path d="M.5 .5H7v15H.500z" fill="none" stroke="#aaa" stroke-dasharray="2 1"/><path d="M4 8h7M9 5.500L12 8l-3 2.500" stroke="#aaa" fill="none" stroke-width="1.300"/></svg>
      <svg class="w-[7px] h-[4px] ml-[7px]"><use href="#caret"/></svg>
      <svg class="w-4 h-4 ml-[11px]" viewBox="0 0 16 16"><path d="M1 2h2M5 2h11M1 6.500h2M5 6.500h11M1 12h2M5 12h4" stroke="#c2c2c2" stroke-width="1.500"/><path d="M11 10l4 5M15 10l-4 5" stroke="#a5a5a5"/></svg>
      <svg class="w-4 h-4 ml-2"><use href="#broom"/></svg>
      <svg class="w-4 h-4 ml-2"><use href="#folder"/></svg>
      <svg class="w-4 h-4 ml-2"><use href="#save"/></svg>
      <svg class="w-4 h-4 ml-2" viewBox="0 0 16 16"><path d="M9 4.500H.5v7H9M12 4.500h3.500v7H12M10.500 1v14M8 .5h5M8 15.500h5" fill="none" stroke="#b5b5b5"/><path d="M2.500 6.500H8v3H2.500z" fill="#c5c5c5"/></svg>
      <svg class="w-[7px] h-[4px] ml-[7px]"><use href="#caret"/></svg>
    </div>
    <div class="pl-[5px] pr-[4px] leading-[20px]">
      <div class="h-[20px]">名称:</div><div class="h-[21px] border border-[#e3e5ea] mt-[4px]"></div>
      <div class="h-[20px] mt-[5px]">表达式:</div><div class="h-[21px] border border-[#e3e5ea] mt-[4px]"></div>
      <div class="h-[20px] mt-[5px]">描述:</div><div class="h-[21px] border border-[#e3e5ea] mt-[4px]"></div>
    </div>
    <div class="flex items-center h-[27px] mt-[11px] bg-[#dfe9f5] text-[13px] pl-[7px] pb-[2px]"><svg class="w-[5px] h-[9px] mr-[14px]" viewBox="0 0 5 9"><path d="M.5 .8L4.300 4.500.500 8.200z" fill="#fff" stroke="#888" stroke-width=".9"/></svg>可见性</div>
  </section>

  <!-- right column -->
  <div class="ml-[5px] w-[948px] flex flex-col">
    <section class="h-[689px] border border-[#d0d3d8]">
      <div class="flex h-[31px] items-center pl-[7px] pt-[6px] text-[21px] leading-[26px] text-[#2b579a] font-light">图形
        <svg class="w-[8px] h-[5px] text-[#cdd2dd] ml-auto -mt-[4px]"><use href="#caret"/></svg><svg class="w-[8px] h-[11px] text-[#cdd2dd] ml-[7px] mr-[4px] -mt-[4px]"><use href="#pin"/></svg>
      </div>
      <div class="flex items-center h-[22px] mb-[2px] pl-[6px]">
        <svg class="w-4 h-4" viewBox="0 0 16 16"><circle cx="6.500" cy="6.500" r="5" fill="none" stroke="#3b6596" stroke-width="1.500"/><path d="M10 10l4.500 4.500" stroke="#3b6596" stroke-width="2.500"/><path d="M4 6.500h5M6.500 4v5" stroke="#3b6596" stroke-width="1.300"/></svg>
        <svg class="w-4 h-4 ml-2" viewBox="0 0 16 16"><circle cx="6.500" cy="6.500" r="5" fill="none" stroke="#3b6596" stroke-width="1.500"/><path d="M10 10l4.500 4.500" stroke="#3b6596" stroke-width="2.500"/><path d="M4 6.500h5" stroke="#3b6596" stroke-width="1.300"/></svg>
        <svg class="w-4 h-4 ml-2" viewBox="0 0 16 16"><path d="M1 7v7.500h8" fill="none" stroke="#3b6596" stroke-dasharray="2 1"/><circle cx="8.500" cy="6" r="4.800" fill="none" stroke="#3b6596" stroke-width="1.500"/><path d="M11.500 9.500l4 4.500" stroke="#3b6596" stroke-width="2.500"/><path d="M6 6h5M8.500 3.500v5" stroke="#3b6596" stroke-width="1.200"/></svg>
        <svg class="w-4 h-4 ml-2" viewBox="0 0 16 16"><path d="M.7 .7h14.600v14.600H.7z" fill="#fff" stroke="#777"/><path d="M8 5.500v5M5.500 8h5" stroke="#777" stroke-width="1.200"/><path d="M8 1.500l2 3H6zM8 14.500l2-3H6zM1.500 8l3-2v4zM14.500 8l-3-2v4z" fill="#4a84be"/></svg>
        <div class="w-px h-[16px] bg-[#cfd2d8] ml-[11px] mr-[12px]"></div>
        <svg class="w-[17px] h-4" viewBox="0 0 17 16"><path d="M7.500 12.500V2M5.800 4l1.700-2.500L9.200 4" stroke="#4a84be" fill="none"/><path d="M7.500 12.500L1.500 8M1.500 10.500V8H4" stroke="#3f9f3f" fill="none"/><path d="M7.500 12.500L16 8M13.500 7.500H16v2" stroke="#d2275a" fill="none"/></svg>
        <svg class="w-[7px] h-[4px] ml-[7px]"><use href="#caret"/></svg>
        <svg class="w-[18px] h-[18px] ml-[11px]" viewBox="0 0 18 18"><rect x=".8" y=".8" width="16.400" height="16.400" rx="1.500" fill="#a9c6e6" stroke="#2b579a" stroke-width="1.600"/><path d="M4.500 4.500h9v9h-9zM7.500 4.500v9M10.500 4.500v9M4.500 7.500h9M4.500 10.500h9" fill="#fff" stroke="#3b70ad"/></svg>
        <div class="w-px h-[16px] bg-[#cfd2d8] ml-[9px] mr-[13px]"></div>
        <svg class="w-4 h-4" viewBox="0 0 16 16"><path d="M0 3.500h4.500l1.500-2h4l1.500 2H16V14H0z" fill="#4a80b8"/><circle cx="8" cy="8.500" r="3.700" fill="#fff"/><circle cx="8" cy="8.500" r="2.300" fill="#4a80b8"/></svg>
        <svg class="w-4 h-4 ml-2" viewBox="0 0 16 16"><path d="M3.500 6V1h8l1 1v4M3.500 11.500h9v4h-9z" fill="#fff" stroke="#4a80b8"/><path d="M1 6h14v7h-2v-2H3v2H1z" fill="#4a80b8"/></svg>
      </div>
      <div class="relative h-[632px] bg-white">
        <canvas id="field" class="absolute left-[215px] top-[145px]" width="474" height="355"></canvas>
        <svg id="plot" class="absolute inset-0 w-[946px] h-[632px]" viewBox="970 197 946 632" font-family="'DejaVu Sans','Noto Sans CJK SC',sans-serif" font-size="12">
          <defs><linearGradient id="jet" x1="0" y1="1" x2="0" y2="0"><stop offset="0" stop-color="#000080"/><stop offset=".125" stop-color="#0000ff"/><stop offset=".375" stop-color="#00ffff"/><stop offset=".625" stop-color="#ffff00"/><stop offset=".875" stop-color="#ff0000"/><stop offset="1" stop-color="#800000"/></linearGradient></defs>
          <text x="986" y="223" fill="#333">有效模式折射率<tspan fill="#000" letter-spacing=".2">=0.0043364</tspan></text>
          <text x="1369" y="223" fill="#333">表面: 电场模 (V/m)</text>
          <text x="972" y="245">×10<tspan dy="-5" font-size="10">-6</tspan></text><text x="972" y="261">m</text>
          <text x="1775" y="824">×10<tspan dy="-5" font-size="10">-3</tspan><tspan dy="5"> m</tspan></text>
          <rect x="1019.500" y="233" width="804.500" height="572.700" fill="none" stroke="#808080" stroke-width="1.700"/>
          <rect x="1184.500" y="341.500" width="474" height="355.500" fill="none" stroke="#000"/>
          <circle cx="1481" cy="519.300" r="47.500" fill="none" stroke="#000"/>
          <rect x="1845.500" y="265.500" width="15" height="535" fill="url(#jet)" stroke="#222"/>
          <g id="ticks" stroke="#808080" stroke-width="1.700"></g>
          <g id="labels"></g>
          <path d="M1889 204l18-4 3 14-12 5-7-3z" fill="#eeeff2"/><rect x="1894" y="206" width="14" height="11" rx="3" fill="#123a8c"/><rect x="1896" y="208" width="4" height="7" fill="#f2e26b"/><path d="M1900 208l5 3.500-5 3.500z" fill="#a9d88a"/><rect x="1905" y="208" width="1.500" height="7" fill="#69c8d8"/>
        </svg>
      </div>
    </section>

    <section class="h-[172px] mt-[5px] border border-[#d0d3d8] relative">
      <div class="flex h-[31px] pt-[5px] pl-[4px] text-[13px] leading-[25px] border-b border-[#d0d3d8]">
        <div class="w-[56px] h-[26px] border border-b-0 border-[#d0d3d8] bg-[#fafbff] text-[#2b579a] pl-[4px] flex items-center">消息<svg class="w-[9px] h-[9px] ml-[8px]" viewBox="0 0 9 9"><path d="M.5 .5l8 8M8.500 .5l-8 8" stroke="#c5ccd8" stroke-width="1.200"/></svg></div>
        <div class="w-[34px] h-[25px] ml-[8px] bg-[#ebebeb] text-center">进度</div>
        <div class="w-[34px] h-[25px] ml-[8px] bg-[#ebebeb] text-center">日志</div>
        <div class="w-[113px] h-[25px] ml-[8px] bg-[#ebebeb] pl-[4px] flex items-center tracking-[0.1px] whitespace-nowrap">Evaluation 2D<svg class="w-[9px] h-[9px] ml-[8px]" viewBox="0 0 9 9"><path d="M.5 .5l8 8M8.500 .5l-8 8" stroke="#c5ccd8" stroke-width="1.200"/></svg></div>
        <svg class="w-[8px] h-[5px] text-[#cdd2dd] ml-auto mt-[14px]"><use href="#caret"/></svg><svg class="w-[8px] h-[11px] text-[#cdd2dd] ml-[7px] mr-[3px] mt-[11px]"><use href="#pin"/></svg>
      </div>
      <svg class="w-4 h-4 ml-[7px] mt-[9px]"><use href="#broom"/></svg>
      <div class="h-[105px] ml-[4px] mr-[3px] mt-[5px] border border-[#d0d3d8] pl-[2px] leading-[17px] whitespace-nowrap">
        <div class="tracking-[0.22px]">COMSOL Multiphysics 5.4.0.388</div>
        <div class="tracking-[0.14px]">[2021-1-2 下午3:41] 打开的文件：D:\Users\ZML\Desktop\导波光学\test2\弯曲的阶跃折射率光纤\弯曲的阶跃圆波导.mph</div>
      </div>

      <!-- floating input-method toolbar -->
      <div class="absolute left-[759px] top-[121px] w-[187px] h-[24px] border border-[#b4b9c0] bg-[#fafbff]">
        <svg class="absolute left-[-21px] top-[-5px] w-[208px] h-[30px]" viewBox="1709 953 208 30"><g transform="rotate(-10 1724 968)"><rect x="1711.500" y="956" width="25" height="24" rx="3.500" fill="#f4511e"/><path d="M1732 961.500c-5-2-15-2-15 2.500 0 5 14 3 14 7.500 0 4-9 4-15 2" fill="none" stroke="#fff" stroke-width="4"/></g>
        <g fill="none" stroke="#1f74c7" stroke-width="2"><path d="M1745 966h12v6h-12zM1751 962.500V977"/><circle cx="1769" cy="967.500" r="1.600" stroke-width="1.300"/><circle cx="1795" cy="969.500" r="7"/><path d="M1791.500 971c1 3.500 6 3.500 7 0" stroke-width="1.500"/><path d="M1811.500 968c0 7.500 11 7.500 11 0M1817 974v3.500M1813.500 977h7"/></g>
        <g fill="#1f74c7"><path d="M1775 969h3.500c.5 3-.5 5-3 6.500l-.7-.8c1-.7 1.400-1.500 1.300-2.500h-1.100z"/><circle cx="1792.500" cy="967.500" r="1.200"/><circle cx="1797.500" cy="967.500" r="1.200"/><rect x="1814" y="962" width="6" height="11" rx="3"/><rect x="1831" y="963.500" width="16" height="12" rx="1.500"/><circle cx="1861.500" cy="966" r="3.500"/><path d="M1856 976c-1-5 1-6.500 5-6.500s6 1.500 6 3V976z"/><path d="M1880 963c2 2 4 2 6 0l4 2-1.500 4-2 0v7.500h-7V969h-2l-1.500-4z"/><rect x="1898" y="963.500" width="6" height="6"/><rect x="1898" y="971" width="6" height="6"/><rect x="1905.500" y="971" width="6" height="6"/></g><rect x="1906" y="964" width="5" height="5" fill="none" stroke="#1f74c7"/><path d="M1833 966.500h12M1833 969.500h12M1835 972.500h8" stroke="#fff" stroke-width="1.300" stroke-dasharray="1.800 1"/><rect x="1860" y="971" width="12" height="6" fill="#fff" stroke="#1f74c7"/><path d="M1862 972.500h3v3h-3M1862 974h3M1867 972v4.500M1867 972.500h2.500v3h-2.500" fill="none" stroke="#1f74c7" stroke-width=".9"/></svg>
      </div>
      <div class="absolute left-[740px] top-[84px] w-[128px] h-[30px] bg-white border border-[#a4a9ae] shadow-sm leading-[28px] pl-[9px] text-[#222]">个性设置，点我看看
        <svg class="absolute left-[8px] top-[27px] w-[11px] h-[7px]" viewBox="0 0 11 7"><path d="M0 0h11L5.500 5z" fill="#fff"/><path d="M.5 1l5 4.500 5-4.500" fill="none" stroke="#a4a9ae"/></svg>
      </div>
    </section>
  </div>
</main>

<!-- status bar -->
<footer class="h-[29px] mt-[4px] bg-[#f0eeed] shrink-0 pl-[1240px] leading-[33px] whitespace-nowrap tracking-[0.25px]">911 MB | 1146 MB</footer>

<!-- taskbar -->
<div class="h-[8px] bg-[#2a2933] shrink-0 overflow-hidden">
  <svg class="w-[1920px] h-[8px] block" viewBox="0 0 1920 8"><rect x="48" width="344" height="8" fill="#3c3b46"/><circle cx="533" cy="8" r="4" fill="#f59a1c"/><path d="M518 6h10v2h-10z" fill="#c9a26b"/><circle cx="582" cy="14" r="8" fill="#c9ccd2"/><circle cx="704" cy="15" r="12" fill="#35c0cf"/><rect x="750" y="4" width="30" height="9" rx="4" fill="#d8121d"/><rect x="811" y="4" width="30" height="9" rx="3" fill="#e8622c"/><rect x="872" y="5" width="28" height="6" fill="#e8ecf2"/><rect x="877" y="5" width="4" height="3" fill="#3b78c4"/><rect x="1055" y="4" width="31" height="9" rx="4" fill="#e8141c"/><circle cx="1131" cy="14" r="10" fill="#000"/><circle cx="1187" cy="15" r="8" fill="#6fdc9a"/><rect x="1238" y="4" width="21" height="6" fill="#04416b"/><path d="M1307 8c3-4 9-3 11 0zM1323 8l4-3 2 3z" fill="#c06a2c"/><circle cx="1375" cy="17" r="13" fill="#8cc152"/><rect x="1421" y="4" width="31" height="9" rx="4" fill="#fff"/><rect x="1483" y="6" width="28" height="4" rx="1" fill="#29abe2"/><rect x="1528" width="60" height="8" fill="#4e4d58"/><path d="M1555 8c4-3 8-2 14-2l-2 2z" fill="#d8d8d8"/><rect x="1915" width="1" height="8" fill="#77767f"/><text x="1815" y="15" font-size="12" fill="#fff" font-family="Open Sans">15:41</text></svg>
</div>
</div>

<script>
// [depth, expanded, icon, name, tag]
const nodes = [
 [0,1,'root','弯曲的阶跃圆波导.mph','root'],[1,1,'globe','全局定义'],[2,0,'pi','参数 1'],[2,1,'mat','材料'],
 [3,1,'mat','硅玻璃','mat1'],[4,0,'mat','基本','def'],[4,0,'mat','折射率','rfi'],[3,1,'mat','掺杂的硅玻璃','mat2'],
 [4,0,'mat','基本','def'],[4,0,'mat','折射率','rfi'],[1,1,'comp1','直光纤','comp1'],[2,1,'def','定义'],
 [3,0,'var','变量 1'],[3,0,'sys','边界坐标系 1','sys1'],[3,1,'xy','视图 1'],[4,0,'xy','轴'],
 [2,1,'geom','几何 1'],[3,0,'circ','圆 1','c1'],[3,0,'circ','圆 2','c2'],[3,0,'fin','形成联合体','fin'],
 [2,1,'mat','材料'],[3,0,'matlnk','包层','matlnk1'],[3,0,'matlnk','纤芯','matlnk2'],[2,1,'wave','电磁波，频域','ewfd'],
 [3,0,'dom','波动方程，电 1'],[3,0,'pec','理想电导体 1'],[3,0,'dom','初始值 1'],[2,0,'mesh','网格 1'],
 [1,1,'comp2','弯曲光纤','comp2'],[2,1,'def','定义'],[3,0,'var','变量 2'],[3,0,'intg','积分 1','intop1'],
 [3,0,'sys','边界坐标系 2','sys2'],[3,0,'pml','完美匹配层 1','pml1'],[3,1,'xyg','视图 2'],[4,0,'xy','轴'],
 [2,1,'geom','几何 2'],[3,0,'circ','圆 1','c1'],[3,0,'sq','正方形 1','sq1'],[3,0,'rect','矩形 1','r1']];
document.getElementById('tree').innerHTML = nodes.map(([d,open,icon,name,tag],i)=>
 `<div class="flex items-center h-[20px] leading-[20px] whitespace-nowrap ${i===2?'bg-[#c1e1fd]':''}" style="padding-left:${5+20*d}px">
  <svg class="w-[7px] h-[7px] mr-[8px] -mt-[3px] shrink-0" viewBox="0 0 7 7">${open?'<path d="M6.500 .3v6.200H.3z" fill="#222"/>':''}</svg>
  <svg class="w-4 h-4 mr-[5px] shrink-0 -mt-px"><use href="#${icon}"/></svg><span class="pt-px">${name}</span>${tag?`<i class="ml-[7px] pt-px tracking-[0.4px]">(${tag})</i>`:''}</div>`).join('');

const params = [['lda0','1.55[um]','1.55E-6 m','波长'],['f0','c_const/lda0','1.9341E14 1/s','频率'],['nClad','1.4378','1.4378','折射率，包层'],
 ['nCore','1.4457','1.4457','折射率，纤芯'],['aCore','8[um]','8E-6 m','纤芯半径'],['aClad','40[um]','4E-5 m','包层半径'],['Rb','3[mm]','0.003 m','弯曲半径'],
 ['aSquare','100[um]','1E-4 m','正方形边长'],['tPML','20[um]','2E-5 m','PML 厚度'],['dr','aSquare/2-tPML','3E-5 m','纤芯中心到 PML 边界的...'],
 ['ldaPML','lda0/sqrt(nClad^2-(nCore*Rb/(Rb...','1.1426E-5 m','PML 中的径向波长'],['','','','']];
document.getElementById('params').innerHTML = params.map(([n,e,v,t],i)=>
 `<div class="grid grid-cols-[70px_213px_90px_1fr] h-[20px] mr-px leading-[19px] whitespace-nowrap border-b border-[#adadad] ${i%2?'bg-[#fcfdff]':'bg-white'}">
  <div class="pl-[3px] border-r border-[#adadad]">${n}</div><div class="pl-[3px] border-r border-[#adadad]">${e}</div>
  <div class="p-px border-r border-[#adadad] bg-white"><div class="bg-[#efefef] h-[17px] leading-[17px] pl-[2px] text-[#222]">${v}</div></div><div class="pl-[3px] border-r border-[#adadad] tracking-[0.05px]">${t}</div></div>`).join('');

// axis ticks and labels
let ticks='', labels='';
for(let k=0;k<13;k++){
  const x=1066+59.25*k;
  ticks+=`<path d="M${x} 233v6M${x} 805.7v-6"/>`;
  if(k<12) labels+=`<text x="${x+.7}" y="824" text-anchor="middle">${+(2.93+k*.01).toFixed(2)}</text>`;
}
for(let v=-45;v<=45;v+=5){
  const y=519.3-v*5.92;
  ticks+=`<path d="M1019.5 ${y}h6M1824 ${y}h-6"/>`;
  if(v<45) labels+=`<text x="1014.5" y="${y+4.2}" text-anchor="end">${v}</text>`;
}
for(let v=100;v<=700;v+=100){
  const y=800-v*.743;
  ticks+=`<path d="M1846 ${y}h2.5M1857.5 ${y}h2.5" stroke="#222" stroke-width="1.2"/>`;
  labels+=`<text x="1869" y="${y+4}">${v}</text>`;
}
document.getElementById('ticks').innerHTML=ticks;
document.getElementById('labels').innerHTML=labels;

// mode field of the bent fibre in the jet colour table
const c=document.getElementById('field'), g=c.getContext('2d'), im=g.createImageData(474,355);
const ramp=t=>255*Math.max(0,Math.min(1,1.5-Math.abs(t)));
for(let j=0;j<355;j++)for(let i=0;i<474;i++){
  const dy=j+342-519.3, dx=i+1185-(1509-.005*Math.min(dy*dy,2500));
  const ex=dx<0?(-dx/34.5)**1.75:(dx/25.5)**1.95;
  let v=.95*Math.exp(-ex-(Math.abs(dy)/35.5)**2);
  v+=.035*Math.exp(-(((dx-12)/(dx<12?45:58))**2)-((dy/52)**2));
  if(dx>-60) v+=.02*Math.exp(-((dy/75)**2))*Math.min(1,(dx+60)/110);
  v=Math.min(1,v);
  const p=4*(j*474+i);
  im.data[p]=ramp(4*v-3); im.data[p+1]=ramp(4*v-2); im.data[p+2]=ramp(4*v-1); im.data[p+3]=255;
}
g.putImageData(im,0,0);
</script>
</body>
</html>
